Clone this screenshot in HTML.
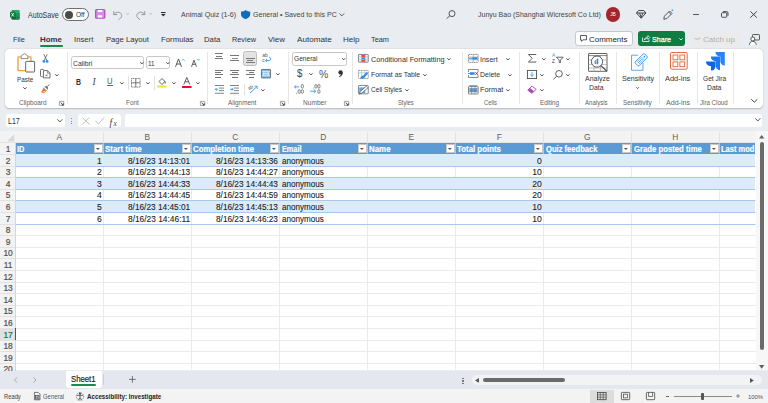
<!DOCTYPE html>
<html><head><meta charset="utf-8"><style>
html,body{margin:0;padding:0;width:768px;height:403px;overflow:hidden;background:#e9ecf0;font-family:"Liberation Sans",sans-serif;}
.t{position:absolute;white-space:nowrap;transform-origin:0 0;}
svg{overflow:visible}
</style></head><body>
<div style="position:absolute;left:0px;top:0px;width:768px;height:403px;background:#e9ecf0"></div>
<div style="position:absolute;left:5px;top:48.6px;width:758.2px;height:59.8px;background:#fff;border-radius:4.5px;box-shadow:0 0.5px 1.5px rgba(0,0,0,.22)"></div>
<div style="position:absolute;left:5.8px;top:114px;width:59px;height:13.2px;background:#fff;border-radius:2.5px"></div>
<div style="position:absolute;left:78.4px;top:114px;width:42.3px;height:13.2px;background:#fff;border-radius:2.5px"></div>
<div style="position:absolute;left:124.9px;top:114px;width:637.1px;height:13.2px;background:#fff;border-radius:2.5px"></div>
<div style="position:absolute;left:0px;top:131px;width:756px;height:239.4px;background:#fff"></div>
<div style="position:absolute;left:0px;top:131px;width:756px;height:12px;background:#f3f3f3"></div>
<div style="position:absolute;left:0px;top:131px;width:16px;height:239.4px;background:#f3f3f3"></div>
<div style="position:absolute;left:756px;top:131px;width:12px;height:239.4px;background:#f7f7f7"></div>
<div class="t" style="left:28.30px;top:10px;font-size:8.4px;line-height:10px;font-weight:400;color:#333;transform:scaleX(0.8456);">AutoSave</div>
<div class="t" style="left:181.00px;top:10px;font-size:7.6px;line-height:9px;font-weight:400;color:#444;transform:scaleX(0.9336);">Animal Quiz (1-6)</div>
<div class="t" style="left:252.80px;top:10px;font-size:7.6px;line-height:9px;font-weight:400;color:#444;transform:scaleX(0.9268);">General • Saved to this PC</div>
<div class="t" style="left:477.70px;top:10px;font-size:7.6px;line-height:9px;font-weight:400;color:#444;transform:scaleX(0.9206);">Junyu Bao (Shanghai Wicresoft Co Ltd)</div>
<div class="t" style="left:13.00px;top:35px;font-size:8.0px;line-height:9px;font-weight:400;color:#333;transform:scaleX(0.9156);">File</div>
<div class="t" style="left:40.10px;top:35px;font-size:8.0px;line-height:9px;font-weight:700;color:#333;transform:scaleX(0.9854);">Home</div>
<div class="t" style="left:73.70px;top:35px;font-size:8.0px;line-height:9px;font-weight:400;color:#333;transform:scaleX(0.9646);">Insert</div>
<div class="t" style="left:105.50px;top:35px;font-size:8.0px;line-height:9px;font-weight:400;color:#333;transform:scaleX(0.9549);">Page Layout</div>
<div class="t" style="left:160.70px;top:35px;font-size:8.0px;line-height:9px;font-weight:400;color:#333;transform:scaleX(0.9747);">Formulas</div>
<div class="t" style="left:204.20px;top:35px;font-size:8.0px;line-height:9px;font-weight:400;color:#333;transform:scaleX(0.9702);">Data</div>
<div class="t" style="left:232.40px;top:35px;font-size:8.0px;line-height:9px;font-weight:400;color:#333;transform:scaleX(0.9141);">Review</div>
<div class="t" style="left:268.00px;top:35px;font-size:8.0px;line-height:9px;font-weight:400;color:#333;transform:scaleX(0.9816);">View</div>
<div class="t" style="left:296.60px;top:35px;font-size:8.0px;line-height:9px;font-weight:400;color:#333;transform:scaleX(1.0164);">Automate</div>
<div class="t" style="left:343.00px;top:35px;font-size:8.0px;line-height:9px;font-weight:400;color:#333;">Help</div>
<div class="t" style="left:371.00px;top:35px;font-size:8.0px;line-height:9px;font-weight:400;color:#333;transform:scaleX(0.9202);">Team</div>
<div style="position:absolute;left:40.1px;top:45.4px;width:22.6px;height:1.5px;background:#1f8450;border-radius:1px"></div>
<svg style="position:absolute;left:9.6px;top:9.6px" width="9.7" height="9.4" viewBox="0 0 9.7 9.4"><rect x="1.5" y="0" width="8.1" height="9.4" rx="1.1" fill="#21a366"/><rect x="1.5" y="3.1" width="8.1" height="3.2" fill="#107c41"/><rect x="1.5" y="6.3" width="8.1" height="3.1" rx="0.6" fill="#185c37"/><rect x="5.6" y="0" width="4" height="9.4" rx="1" fill="#33c481" opacity="0.35"/><rect x="0" y="1.8" width="5.3" height="5.8" rx="0.7" fill="#107c41"/><path d="M1.5 3 L3.8 6.4 M3.8 3 L1.5 6.4" stroke="#fff" stroke-width="0.8"/></svg>
<div style="position:absolute;left:62.3px;top:8.3px;width:26.5px;height:12.5px;box-sizing:border-box;border:0.9px solid #6e6e6e;border-radius:7px;background:#fbfbfb"></div>
<div style="position:absolute;left:64.7px;top:10.5px;width:8.0px;height:8.0px;background:#4a4a4a;border-radius:50%"></div>
<div class="t" style="left:75.80px;top:10px;font-size:7.2px;line-height:9px;font-weight:400;color:#333;transform:scaleX(0.9063);">Off</div>
<svg style="position:absolute;left:95.2px;top:9.4px" width="10.4" height="9.8" viewBox="0 0 10.4 9.8"><rect x="0" y="0" width="10.4" height="9.8" rx="1.6" fill="#b74fc9"/><rect x="1.3" y="1.1" width="7.8" height="7.6" rx="0.6" fill="#d591e0"/><rect x="2.6" y="1.1" width="4.9" height="2.0" rx="0.8" fill="#fff"/><rect x="2.8" y="6.3" width="4.4" height="2.2" rx="0.8" fill="#fff"/></svg>
<svg style="position:absolute;left:112.9px;top:9.7px" width="9.6" height="9.6" viewBox="0 0 9.6 9.6"><path d="M0.8 1.2 L0.8 4.6 L4.2 4.6" fill="none" stroke="#8c8c8c" stroke-width="0.9" stroke-linejoin="round"/><path d="M0.9 4.5 C2.6 2.2 5.6 1.4 7.6 3.2 C9.6 5 9 8 5.6 9.4" fill="none" stroke="#8c8c8c" stroke-width="0.9"/></svg>
<svg style="position:absolute;left:126px;top:13.3px" width="3.2" height="1.8" viewBox="0 0 3.2 1.8"><path d="M0.3 0.3 L1.6 1.5 L2.9 0.3" fill="none" stroke="#a0a0a0" stroke-width="0.7"/></svg>
<svg style="position:absolute;left:135.8px;top:9.7px" width="9.6" height="9.6" viewBox="0 0 9.6 9.6"><path d="M8.8 1.2 L8.8 4.6 L5.4 4.6" fill="none" stroke="#8c8c8c" stroke-width="0.9" stroke-linejoin="round"/><path d="M8.7 4.5 C7 2.2 4 1.4 2 3.2 C0 5 0.6 8 4 9.4" fill="none" stroke="#8c8c8c" stroke-width="0.9"/></svg>
<svg style="position:absolute;left:148.5px;top:13.3px" width="3.2" height="1.8" viewBox="0 0 3.2 1.8"><path d="M0.3 0.3 L1.6 1.5 L2.9 0.3" fill="none" stroke="#a0a0a0" stroke-width="0.7"/></svg>
<svg style="position:absolute;left:160.9px;top:12.3px" width="4.6" height="4.4" viewBox="0 0 4.6 4.4"><rect x="0" y="0" width="4.6" height="1.1" fill="#333"/><path d="M0 1.9 L4.6 1.9 L2.3 4.4 Z" fill="#333"/></svg>
<svg style="position:absolute;left:241.1px;top:10.4px" width="9.2" height="9.2" viewBox="0 0 9.2 9.2"><path d="M4.6 0 C3.3 1.1 1.7 1.6 0 1.6 L0 4.6 C0 6.9 1.8 8.4 4.6 9.2 C7.4 8.4 9.2 6.9 9.2 4.6 L9.2 1.6 C7.5 1.6 5.9 1.1 4.6 0 Z" fill="#0f6cbd"/></svg>
<svg style="position:absolute;left:339.2px;top:12.5px" width="5.5" height="3.5" viewBox="0 0 5.5 3.5"><path d="M0.4 0.5 L2.75 2.9 L5.1 0.5" fill="none" stroke="#444" stroke-width="0.9"/></svg>
<svg style="position:absolute;left:446px;top:10px" width="10" height="9" viewBox="0 0 10 9"><circle cx="6" cy="3.6" r="3" fill="none" stroke="#444" stroke-width="0.9"/><path d="M3.9 5.7 L0.6 8.6" stroke="#444" stroke-width="0.9"/></svg>
<div style="position:absolute;left:605.8px;top:7.3px;width:14.3px;height:14.3px;background:#a4262c;border-radius:50%"></div>
<div class="t" style="left:610.20px;top:12px;font-size:4.8px;line-height:5px;font-weight:400;color:#fff;">JB</div>
<svg style="position:absolute;left:635.8px;top:9.6px" width="10.4" height="8.8" viewBox="0 0 10.4 8.8"><path d="M2.6 0.5 L7.8 0.5 L9.9 3 L5.2 8.3 L0.5 3 Z M0.5 3 L9.9 3 M3.6 3 L5.2 7.6 L6.8 3" fill="none" stroke="#333" stroke-width="0.9" stroke-linejoin="round"/></svg>
<svg style="position:absolute;left:662.8px;top:8.7px" width="11" height="10.8" viewBox="0 0 11 10.8"><path d="M0.8 10.2 L1.4 7.2 L6.6 2 L9 4.4 L3.8 9.6 Z" fill="none" stroke="#444" stroke-width="0.9" stroke-linejoin="round"/><path d="M5.6 3 L8 5.4" stroke="#444" stroke-width="0.8"/><path d="M9.4 0.4 L9.4 2.2 M8.5 1.3 L10.3 1.3" stroke="#2899f5" stroke-width="0.7"/></svg>
<div style="position:absolute;left:692.8px;top:13.6px;width:6.2px;height:0.8px;background:#555"></div>
<svg style="position:absolute;left:721px;top:11.2px" width="7.5" height="6.8" viewBox="0 0 7.5 6.8"><rect x="0.5" y="1.7" width="5.3" height="4.6" rx="1" fill="none" stroke="#333" stroke-width="0.85"/><path d="M2 0.6 L5.6 0.6 Q7 0.6 7 2 L7 4.8" fill="none" stroke="#333" stroke-width="0.85"/></svg>
<svg style="position:absolute;left:750px;top:11px" width="7.2" height="7" viewBox="0 0 7.2 7"><path d="M0.4 0.4 L6.8 6.6 M6.8 0.4 L0.4 6.6" stroke="#333" stroke-width="0.9"/></svg>
<div style="position:absolute;left:574.9px;top:31.4px;width:57.7px;height:14.9px;box-sizing:border-box;border:1px solid #c8c8c8;border-radius:3px;background:#fff"></div>
<svg style="position:absolute;left:579.5px;top:35px" width="7" height="7" viewBox="0 0 7 7"><path d="M0.5 0.5 L6.5 0.5 L6.5 4.8 L3 4.8 L1.4 6.4 L1.4 4.8 L0.5 4.8 Z" fill="none" stroke="#333" stroke-width="0.8" stroke-linejoin="round"/></svg>
<div class="t" style="left:589.00px;top:35px;font-size:7.8px;line-height:9px;font-weight:400;color:#242424;transform:scaleX(1.0209);">Comments</div>
<div style="position:absolute;left:637.5px;top:31.4px;width:47.1px;height:14.9px;background:#107c41;border-radius:3px"></div>
<svg style="position:absolute;left:641.5px;top:35px" width="8" height="7" viewBox="0 0 8 7"><path d="M0.5 2.6 L0.5 6.5 L7 6.5 L7 4.5" fill="none" stroke="#fff" stroke-width="0.8"/><path d="M2.4 5 C2.6 3 4 2 6 2 L6 0.6 L7.8 2.6 L6 4.4 L6 3.2 C4.4 3.2 3.3 3.8 2.4 5 Z" fill="none" stroke="#fff" stroke-width="0.7"/></svg>
<div class="t" style="left:651.50px;top:35px;font-size:7.9px;line-height:9px;font-weight:400;color:#fff;transform:scaleX(0.9014);-webkit-text-stroke:0.25px #fff">Share</div>
<svg style="position:absolute;left:678.6px;top:37.5px" width="4" height="2.5" viewBox="0 0 4 2.5"><path d="M0.3 0.3 L2 2 L3.7 0.3" fill="none" stroke="#fff" stroke-width="0.8"/></svg>
<div style="position:absolute;left:690.5px;top:31.4px;width:49.5px;height:14.9px;background:#ebebeb;border-radius:3px"></div>
<svg style="position:absolute;left:694px;top:36.5px" width="7" height="4" viewBox="0 0 7 4"><path d="M0.3 2.5 L1.8 1 L3.4 3 L5 0.8 L6.6 2" fill="none" stroke="#b4b4b4" stroke-width="0.8"/></svg>
<div class="t" style="left:702.50px;top:35px;font-size:7.8px;line-height:9px;font-weight:400;color:#b0b0b0;transform:scaleX(1.0251);">Catch up</div>
<svg style="position:absolute;left:748.8px;top:33.6px" width="11.2" height="11.4" viewBox="0 0 11.2 11.4"><rect x="3.5" y="0.5" width="7" height="5.5" rx="0.8" fill="none" stroke="#333" stroke-width="0.8"/><circle cx="3.8" cy="5" r="2" fill="#fff" stroke="#333" stroke-width="0.8"/><path d="M0.4 10.8 C0.6 8.3 2 7.4 3.8 7.4 C5.6 7.4 7 8.3 7.2 10.8" fill="#fff" stroke="#333" stroke-width="0.8"/></svg>
<div style="position:absolute;left:66.5px;top:52px;width:0.7px;height:52px;background:#e6e6e6"></div>
<div style="position:absolute;left:207.2px;top:52px;width:0.7px;height:52px;background:#e6e6e6"></div>
<div style="position:absolute;left:288px;top:52px;width:0.7px;height:52px;background:#e6e6e6"></div>
<div style="position:absolute;left:351.8px;top:52px;width:0.7px;height:52px;background:#e6e6e6"></div>
<div style="position:absolute;left:461.8px;top:52px;width:0.7px;height:52px;background:#e6e6e6"></div>
<div style="position:absolute;left:519.4px;top:52px;width:0.7px;height:52px;background:#e6e6e6"></div>
<div style="position:absolute;left:578.5px;top:52px;width:0.7px;height:52px;background:#e6e6e6"></div>
<div style="position:absolute;left:615.7px;top:52px;width:0.7px;height:52px;background:#e6e6e6"></div>
<div style="position:absolute;left:659.4px;top:52px;width:0.7px;height:52px;background:#e6e6e6"></div>
<div style="position:absolute;left:697.3px;top:52px;width:0.7px;height:52px;background:#e6e6e6"></div>
<div style="position:absolute;left:732.6px;top:52px;width:0.7px;height:52px;background:#e6e6e6"></div>
<div class="t" style="left:18.50px;top:99px;font-size:7.0px;line-height:7px;font-weight:400;color:#5f5f5f;transform:scaleX(0.9179);">Clipboard</div>
<div class="t" style="left:125.50px;top:99px;font-size:7.0px;line-height:7px;font-weight:400;color:#5f5f5f;transform:scaleX(0.9067);">Font</div>
<div class="t" style="left:228.40px;top:99px;font-size:7.0px;line-height:7px;font-weight:400;color:#5f5f5f;transform:scaleX(0.9091);">Alignment</div>
<div class="t" style="left:302.60px;top:99px;font-size:7.0px;line-height:7px;font-weight:400;color:#5f5f5f;transform:scaleX(0.9398);">Number</div>
<div class="t" style="left:398.30px;top:99px;font-size:7.0px;line-height:7px;font-weight:400;color:#5f5f5f;transform:scaleX(0.8237);">Styles</div>
<div class="t" style="left:483.70px;top:99px;font-size:7.0px;line-height:7px;font-weight:400;color:#5f5f5f;transform:scaleX(0.8290);">Cells</div>
<div class="t" style="left:540.00px;top:99px;font-size:7.0px;line-height:7px;font-weight:400;color:#5f5f5f;transform:scaleX(0.8876);">Editing</div>
<div class="t" style="left:585.40px;top:99px;font-size:7.0px;line-height:7px;font-weight:400;color:#5f5f5f;transform:scaleX(0.8670);">Analysis</div>
<div class="t" style="left:623.00px;top:99px;font-size:7.0px;line-height:7px;font-weight:400;color:#5f5f5f;transform:scaleX(0.9141);">Sensitivity</div>
<div class="t" style="left:666.00px;top:99px;font-size:7.0px;line-height:7px;font-weight:400;color:#5f5f5f;transform:scaleX(1.0111);">Add-ins</div>
<div class="t" style="left:700.30px;top:99px;font-size:7.0px;line-height:7px;font-weight:400;color:#5f5f5f;transform:scaleX(0.8790);">Jira Cloud</div>
<svg style="position:absolute;left:59.4px;top:100.5px" width="5.2" height="4.8" viewBox="0 0 5.2 4.8"><path d="M0.4 0.4 L4.8 0.4 L4.8 4.4 L0.4 4.4 Z" fill="none" stroke="#666" stroke-width="0.6"/><path d="M1.6 1.6 L4.2 4.0 M4.2 2.4 L4.2 4.0 L2.6 4.0" fill="none" stroke="#333" stroke-width="0.8"/></svg>
<svg style="position:absolute;left:199.7px;top:100.5px" width="5.2" height="4.8" viewBox="0 0 5.2 4.8"><path d="M0.4 0.4 L4.8 0.4 L4.8 4.4 L0.4 4.4 Z" fill="none" stroke="#666" stroke-width="0.6"/><path d="M1.6 1.6 L4.2 4.0 M4.2 2.4 L4.2 4.0 L2.6 4.0" fill="none" stroke="#333" stroke-width="0.8"/></svg>
<svg style="position:absolute;left:280.2px;top:100.5px" width="5.2" height="4.8" viewBox="0 0 5.2 4.8"><path d="M0.4 0.4 L4.8 0.4 L4.8 4.4 L0.4 4.4 Z" fill="none" stroke="#666" stroke-width="0.6"/><path d="M1.6 1.6 L4.2 4.0 M4.2 2.4 L4.2 4.0 L2.6 4.0" fill="none" stroke="#333" stroke-width="0.8"/></svg>
<svg style="position:absolute;left:343.8px;top:100.5px" width="5.2" height="4.8" viewBox="0 0 5.2 4.8"><path d="M0.4 0.4 L4.8 0.4 L4.8 4.4 L0.4 4.4 Z" fill="none" stroke="#666" stroke-width="0.6"/><path d="M1.6 1.6 L4.2 4.0 M4.2 2.4 L4.2 4.0 L2.6 4.0" fill="none" stroke="#333" stroke-width="0.8"/></svg>
<svg style="position:absolute;left:16.8px;top:52.8px" width="18.5" height="19.5" viewBox="0 0 18.5 19.5"><path d="M3.6 3.9 L1.6 3.9 Q1 3.9 1 4.5 L1 17 Q1 17.6 1.6 17.6 L8.6 17.6" fill="none" stroke="#f0a030" stroke-width="1.3"/><path d="M11.4 3.9 L13.4 3.9 Q14 3.9 14 4.5 L14 8" fill="none" stroke="#f0a030" stroke-width="1.3"/><path d="M3.9 5.6 L4.4 2.6 L7.5 0.7 L10.6 2.6 L11.1 5.6 Z" fill="#fff" stroke="#707070" stroke-width="0.8" stroke-linejoin="round"/><rect x="8.7" y="8.4" width="8.9" height="10.6" rx="0.6" fill="#fff" stroke="#555" stroke-width="0.9"/></svg>
<div class="t" style="left:16.50px;top:75px;font-size:7.4px;line-height:9px;font-weight:400;color:#333;transform:scaleX(0.8562);">Paste</div>
<svg style="position:absolute;left:22.6px;top:87.3px" width="3.8" height="2.2" viewBox="0 0 3.8 2.2"><path d="M0.3 0.3 L1.9 2.0 L3.5 0.3" fill="none" stroke="#444" stroke-width="0.95"/></svg>
<svg style="position:absolute;left:41.7px;top:54px" width="7" height="9.2" viewBox="0 0 7 9.2"><path d="M1.8 0.2 L4.6 6 M5.2 0.2 L2.4 6" stroke="#555" stroke-width="0.8"/><circle cx="1.9" cy="7.4" r="1.4" fill="#2f8fe0"/><circle cx="5.1" cy="7.4" r="1.4" fill="#2f8fe0"/></svg>
<svg style="position:absolute;left:40px;top:69.4px" width="10.6" height="9.4" viewBox="0 0 10.6 9.4"><path d="M2.6 7.6 L1.4 7.6 Q0.5 7.6 0.5 6.7 L0.5 1.2 Q0.5 0.4 1.4 0.4 L3.6 0.4" fill="none" stroke="#555" stroke-width="0.85"/><path d="M3.4 1.6 L7.4 1.6 L10 4.2 L10 8.9 L3.4 8.9 Z" fill="#fff" stroke="#555" stroke-width="0.85" stroke-linejoin="round"/><path d="M7.4 1.6 L7.4 4.2 L10 4.2" fill="none" stroke="#555" stroke-width="0.6"/><rect x="5.6" y="5.6" width="1.8" height="1.6" fill="#888"/></svg>
<svg style="position:absolute;left:55px;top:73.5px" width="3.8" height="2.2" viewBox="0 0 3.8 2.2"><path d="M0.3 0.3 L1.9 2.0 L3.5 0.3" fill="none" stroke="#444" stroke-width="0.95"/></svg>
<svg style="position:absolute;left:40.6px;top:84.3px" width="8.6" height="9.2" viewBox="0 0 8.6 9.2"><path d="M0.3 8.2 L2.6 3.8 L5.4 6.6 Z" fill="#e8731c"/><path d="M2.6 3.8 L3.8 2.6 L6.6 5.4 L5.4 6.6 Z" fill="#fff" stroke="#888" stroke-width="0.5"/><path d="M3.8 2.6 L5.6 2 L7 3.4 L6.6 5.4 Z" fill="#666"/><path d="M6.2 2.6 L8.3 0.4" stroke="#666" stroke-width="1"/><path d="M0.3 8.2 L3.2 8.6 L5.4 6.6" fill="none" stroke="#e8731c" stroke-width="0.8"/></svg>
<div style="position:absolute;left:71.4px;top:56.2px;width:72.6px;height:13.3px;box-sizing:border-box;border:0.8px solid #c7c7c7;border-radius:2.5px;background:#fff"></div>
<div class="t" style="left:73.00px;top:59px;font-size:7.9px;line-height:9px;font-weight:400;color:#333;transform:scaleX(0.8620);">Calibri</div>
<svg style="position:absolute;left:139.5px;top:62.4px" width="3.6" height="2.2" viewBox="0 0 3.6 2.2"><path d="M0.3 0.3 L1.8 2.0 L3.3000000000000003 0.3" fill="none" stroke="#444" stroke-width="0.95"/></svg>
<div style="position:absolute;left:146px;top:56.2px;width:24.4px;height:13.3px;box-sizing:border-box;border:0.8px solid #c7c7c7;border-radius:2.5px;background:#fff"></div>
<div class="t" style="left:147.60px;top:59px;font-size:7.9px;line-height:9px;font-weight:400;color:#333;transform:scaleX(0.8049);">11</div>
<svg style="position:absolute;left:165.6px;top:62.4px" width="3.6" height="2.2" viewBox="0 0 3.6 2.2"><path d="M0.3 0.3 L1.8 2.0 L3.3000000000000003 0.3" fill="none" stroke="#444" stroke-width="0.95"/></svg>
<svg style="position:absolute;left:175px;top:57.5px" width="10" height="9" viewBox="0 0 10 9"><path d="M0.5 8.8 L3.5 1 L6.5 8.8 M1.6 6 L5.4 6" fill="none" stroke="#444" stroke-width="0.9"/><path d="M7 2.6 L8.3 1.2 L9.6 2.6" fill="none" stroke="#2899f5" stroke-width="0.8"/></svg>
<svg style="position:absolute;left:191.3px;top:57.5px" width="9" height="9" viewBox="0 0 9 9"><path d="M0.5 8.8 L3 2.2 L5.5 8.8 M1.4 6.3 L4.6 6.3" fill="none" stroke="#444" stroke-width="0.85"/><path d="M6 1 L7.3 2.4 L8.6 1" fill="none" stroke="#2899f5" stroke-width="0.8"/></svg>
<div class="t" style="left:76.30px;top:77px;font-size:9.0px;line-height:10px;font-weight:700;color:#333;transform:scaleX(0.7695);">B</div>
<div class="t" style="left:92.40px;top:77px;font-size:9.4px;line-height:11px;font-weight:400;color:#444;font-style:italic;font-family:Liberation Serif">I</div>
<div class="t" style="left:106.90px;top:76px;font-size:8.6px;line-height:10px;font-weight:400;color:#555;transform:scaleX(0.8858);">U</div>
<div style="position:absolute;left:106.7px;top:85.3px;width:5.9px;height:0.7px;background:#666"></div>
<svg style="position:absolute;left:119.7px;top:81.8px" width="3.8" height="2.2" viewBox="0 0 3.8 2.2"><path d="M0.3 0.3 L1.9 2.0 L3.5 0.3" fill="none" stroke="#444" stroke-width="0.95"/></svg>
<div style="position:absolute;left:127.5px;top:75.5px;width:0.6px;height:14px;background:#e0e0e0"></div>
<svg style="position:absolute;left:131px;top:77.5px" width="9.6" height="9.6" viewBox="0 0 9.6 9.6"><rect x="0.5" y="0.5" width="8.6" height="8.6" fill="none" stroke="#555" stroke-width="0.8" stroke-dasharray="1 0.6"/><path d="M4.8 0.5 L4.8 9.1 M0.5 4.8 L9.1 4.8" stroke="#555" stroke-width="0.8"/></svg>
<svg style="position:absolute;left:146px;top:81.8px" width="3.8" height="2.2" viewBox="0 0 3.8 2.2"><path d="M0.3 0.3 L1.9 2.0 L3.5 0.3" fill="none" stroke="#444" stroke-width="0.95"/></svg>
<div style="position:absolute;left:153.5px;top:75.5px;width:0.6px;height:14px;background:#e0e0e0"></div>
<svg style="position:absolute;left:157.4px;top:77px" width="9.6" height="11" viewBox="0 0 9.6 11"><path d="M2 4.5 L5 1.5 L8 4.5 L5 7.5 Z" fill="none" stroke="#444" stroke-width="0.8"/><path d="M7.4 4 C8.5 5 8.8 6 8.2 6.6" fill="#2f6ea8" stroke="#2f6ea8" stroke-width="0.8"/><rect x="0" y="8.5" width="9.6" height="2" fill="#ffe11a"/></svg>
<svg style="position:absolute;left:171.8px;top:81.8px" width="3.8" height="2.2" viewBox="0 0 3.8 2.2"><path d="M0.3 0.3 L1.9 2.0 L3.5 0.3" fill="none" stroke="#444" stroke-width="0.95"/></svg>
<svg style="position:absolute;left:181.6px;top:76.5px" width="9.6" height="11.5" viewBox="0 0 9.6 11.5"><path d="M1.8 7.5 L4.8 0.5 L7.8 7.5 M3 4.8 L6.6 4.8" fill="none" stroke="#444" stroke-width="0.85"/><rect x="0" y="9" width="9.6" height="2" fill="#e81123"/></svg>
<svg style="position:absolute;left:196px;top:81.8px" width="3.8" height="2.2" viewBox="0 0 3.8 2.2"><path d="M0.3 0.3 L1.9 2.0 L3.5 0.3" fill="none" stroke="#444" stroke-width="0.95"/></svg>
<div style="position:absolute;left:243.3px;top:51.3px;width:13.9px;height:14.4px;background:#e3e3e3;border:0.8px solid #bdbdbd;border-radius:2.5px;box-sizing:border-box"></div>
<div style="position:absolute;left:214.9px;top:53.4px;width:8.5px;height:1.0px;background:#777"></div>
<div style="position:absolute;left:216.1px;top:56.0px;width:5.8px;height:1.0px;background:#777"></div>
<div style="position:absolute;left:214.9px;top:58.2px;width:8.5px;height:1.0px;background:#777"></div>
<div style="position:absolute;left:230.4px;top:55.1px;width:8.5px;height:1.0px;background:#777"></div>
<div style="position:absolute;left:231.6px;top:57.6px;width:6.0px;height:1.0px;background:#8a8a8a"></div>
<div style="position:absolute;left:230.4px;top:60.2px;width:8.5px;height:1.0px;background:#777"></div>
<div style="position:absolute;left:246.0px;top:57.6px;width:8.5px;height:1.0px;background:#777"></div>
<div style="position:absolute;left:247.2px;top:60.0px;width:6.0px;height:1.0px;background:#777"></div>
<div style="position:absolute;left:246.0px;top:62.4px;width:8.5px;height:1.0px;background:#777"></div>
<svg style="position:absolute;left:262.4px;top:53.4px" width="9.4" height="10" viewBox="0 0 9.4 10"><text x="0.3" y="4.4" font-size="5" font-family="Liberation Sans" fill="#555">ab</text><text x="0.3" y="9.2" font-size="5" font-family="Liberation Sans" fill="#555">c</text><path d="M3.6 7.6 L7.2 7.6 C9 7.6 9 4.2 7.2 4.2" fill="none" stroke="#2899f5" stroke-width="0.9"/><path d="M4.9 6.2 L3.5 7.6 L4.9 9" fill="none" stroke="#2899f5" stroke-width="0.9"/></svg>
<div style="position:absolute;left:214.9px;top:69.5px;width:8.5px;height:1.0px;background:#777"></div>
<div style="position:absolute;left:230.4px;top:69.5px;width:8.5px;height:1.0px;background:#777"></div>
<div style="position:absolute;left:246.0px;top:69.5px;width:8.5px;height:1.0px;background:#777"></div>
<div style="position:absolute;left:214.9px;top:72.1px;width:5.9px;height:1.0px;background:#777"></div>
<div style="position:absolute;left:231.7px;top:72.1px;width:5.9px;height:1.0px;background:#777"></div>
<div style="position:absolute;left:248.6px;top:72.1px;width:5.9px;height:1.0px;background:#777"></div>
<div style="position:absolute;left:214.9px;top:74.4px;width:8.5px;height:1.0px;background:#777"></div>
<div style="position:absolute;left:230.4px;top:74.4px;width:8.5px;height:1.0px;background:#777"></div>
<div style="position:absolute;left:246.0px;top:74.4px;width:8.5px;height:1.0px;background:#777"></div>
<div style="position:absolute;left:214.9px;top:77.0px;width:5.9px;height:1.0px;background:#777"></div>
<div style="position:absolute;left:231.7px;top:77.0px;width:5.9px;height:1.0px;background:#777"></div>
<div style="position:absolute;left:248.6px;top:77.0px;width:5.9px;height:1.0px;background:#777"></div>
<svg style="position:absolute;left:260.8px;top:68.6px" width="10" height="9.4" viewBox="0 0 10 9.4"><rect x="0.45" y="0.45" width="9.1" height="8.5" rx="0.5" fill="#7dbdf0" stroke="#666" stroke-width="0.9"/><path d="M0.9 2.7 L9.1 2.7 M0.9 6.7 L9.1 6.7" stroke="#fff" stroke-width="0.7"/><path d="M2 4.7 L8 4.7" stroke="#fff" stroke-width="0.8"/><path d="M3.2 3.6 L2 4.7 L3.2 5.8 M6.8 3.6 L8 4.7 L6.8 5.8" fill="none" stroke="#fff" stroke-width="0.8"/></svg>
<svg style="position:absolute;left:275.9px;top:73px" width="3.8" height="2.2" viewBox="0 0 3.8 2.2"><path d="M0.3 0.3 L1.9 2.0 L3.5 0.3" fill="none" stroke="#444" stroke-width="0.95"/></svg>
<svg style="position:absolute;left:214.7px;top:84.6px" width="9" height="8.8" viewBox="0 0 9 8.8"><rect x="0" y="0" width="9" height="0.9" fill="#777"/><rect x="4" y="2.6" width="5" height="0.9" fill="#777"/><rect x="4" y="5.2" width="5" height="0.9" fill="#777"/><rect x="0" y="7.8" width="9" height="0.9" fill="#777"/><path d="M0.3 4.35 L3.2 4.35" stroke="#2899f5" stroke-width="0.9"/><path d="M1.6 3 L0.3 4.35 L1.6 5.7" fill="none" stroke="#2899f5" stroke-width="0.9"/></svg>
<svg style="position:absolute;left:230.4px;top:84.6px" width="9" height="8.8" viewBox="0 0 9 8.8"><rect x="0" y="0" width="9" height="0.9" fill="#777"/><rect x="4" y="2.6" width="5" height="0.9" fill="#777"/><rect x="4" y="5.2" width="5" height="0.9" fill="#777"/><rect x="0" y="7.8" width="9" height="0.9" fill="#777"/><path d="M0.2 4.35 L3.1 4.35" stroke="#2899f5" stroke-width="0.9"/><path d="M1.8 3 L3.1 4.35 L1.8 5.7" fill="none" stroke="#2899f5" stroke-width="0.9"/></svg>
<div style="position:absolute;left:243.6px;top:84px;width:0.6px;height:11px;background:#e0e0e0"></div>
<svg style="position:absolute;left:248px;top:84px" width="10" height="9.5" viewBox="0 0 10 9.5"><text x="0" y="5" font-size="5" font-family="Liberation Sans" fill="#555" transform="rotate(-30 3 4)">ab</text><path d="M2 9 L9 2.5" stroke="#2899f5" stroke-width="0.9"/><path d="M6.5 2.2 L9.2 2.2 L9.2 5" fill="none" stroke="#2899f5" stroke-width="0.8"/></svg>
<svg style="position:absolute;left:260.6px;top:88.5px" width="3.8" height="2.2" viewBox="0 0 3.8 2.2"><path d="M0.3 0.3 L1.9 2.0 L3.5 0.3" fill="none" stroke="#444" stroke-width="0.95"/></svg>
<div style="position:absolute;left:292.3px;top:51.5px;width:54.3px;height:14.1px;box-sizing:border-box;border:0.8px solid #c7c7c7;border-radius:2.5px;background:#fff"></div>
<div class="t" style="left:293.80px;top:54px;font-size:7.9px;line-height:9px;font-weight:400;color:#333;transform:scaleX(0.8361);">General</div>
<svg style="position:absolute;left:342px;top:57.9px" width="3.4" height="2.1" viewBox="0 0 3.4 2.1"><path d="M0.3 0.3 L1.7 1.9000000000000001 L3.1 0.3" fill="none" stroke="#444" stroke-width="0.95"/></svg>
<div class="t" style="left:296.60px;top:68px;font-size:10.4px;line-height:11px;font-weight:400;color:#444;transform:scaleX(0.9339);">$</div>
<svg style="position:absolute;left:309px;top:72.6px" width="3.8" height="2.2" viewBox="0 0 3.8 2.2"><path d="M0.3 0.3 L1.9 2.0 L3.5 0.3" fill="none" stroke="#444" stroke-width="0.95"/></svg>
<div class="t" style="left:319.30px;top:68px;font-size:11.2px;line-height:12px;font-weight:400;color:#555;transform:scaleX(0.9340);">%</div>
<svg style="position:absolute;left:337.6px;top:70.4px" width="5" height="7.4" viewBox="0 0 5 7.4"><circle cx="2.6" cy="2.4" r="2.2" fill="#333"/><path d="M4.6 2.6 C4.8 5 3.4 6.6 1.2 7.2 L1 6.4 C2.4 5.8 3.2 4.8 3 3.8 Z" fill="#333"/></svg>
<svg style="position:absolute;left:294.4px;top:84.2px" width="10" height="9.8" viewBox="0 0 10 9.8"><path d="M0.6 2.9 L5.2 2.9" stroke="#2899f5" stroke-width="0.9"/><path d="M2.2 1.3 L0.5 2.9 L2.2 4.5" fill="none" stroke="#2899f5" stroke-width="0.9"/><ellipse cx="8.3" cy="2.3" rx="1.15" ry="1.9" fill="none" stroke="#555" stroke-width="0.7"/><circle cx="2.6" cy="9.2" r="0.45" fill="#555"/><ellipse cx="5.2" cy="7.5" rx="1.15" ry="1.9" fill="none" stroke="#555" stroke-width="0.7"/><ellipse cx="8.3" cy="7.5" rx="1.15" ry="1.9" fill="none" stroke="#555" stroke-width="0.7"/></svg>
<svg style="position:absolute;left:310.2px;top:84.2px" width="10.2" height="9.8" viewBox="0 0 10.2 9.8"><circle cx="3.4" cy="4" r="0.45" fill="#555"/><ellipse cx="5.9" cy="2.3" rx="1.15" ry="1.9" fill="none" stroke="#555" stroke-width="0.7"/><ellipse cx="8.9" cy="2.3" rx="1.15" ry="1.9" fill="none" stroke="#555" stroke-width="0.7"/><ellipse cx="8.9" cy="7.5" rx="1.15" ry="1.9" fill="none" stroke="#555" stroke-width="0.7"/><path d="M0.2 7.2 L5.6 7.2" stroke="#2899f5" stroke-width="0.9"/><path d="M4 5.6 L5.7 7.2 L4 8.8" fill="none" stroke="#2899f5" stroke-width="0.9"/></svg>
<svg style="position:absolute;left:358.2px;top:54.2px" width="10.7" height="8.6" viewBox="0 0 10.7 8.6"><rect x="0.45" y="0.45" width="9.8" height="7.7" rx="0.5" fill="#f4f4f4" stroke="#7a7a7a" stroke-width="0.9"/><path d="M0.5 3 L10.2 3 M0.5 5.6 L10.2 5.6" stroke="#a0a0a0" stroke-width="0.5"/><rect x="3.4" y="0.9" width="3.9" height="2.0" fill="#e8434a"/><rect x="3.4" y="3.3" width="3.9" height="2.0" fill="#2f8fe0"/><rect x="3.4" y="5.8" width="3.9" height="2.0" fill="#e8434a"/></svg>
<div class="t" style="left:370.90px;top:55px;font-size:7.9px;line-height:9px;font-weight:400;color:#333;transform:scaleX(0.9273);">Conditional Formatting</div>
<svg style="position:absolute;left:447.2px;top:58.3px" width="3.8" height="2.2" viewBox="0 0 3.8 2.2"><path d="M0.3 0.3 L1.9 2.0 L3.5 0.3" fill="none" stroke="#444" stroke-width="0.95"/></svg>
<svg style="position:absolute;left:358.2px;top:69.6px" width="10.7" height="9" viewBox="0 0 10.7 9"><rect x="0.45" y="0.45" width="9.8" height="8.1" rx="0.5" fill="#fff" stroke="#7a7a7a" stroke-width="0.8" stroke-dasharray="1.2 0.5"/><path d="M0.5 2.8 L10.2 2.8 M3.6 0.5 L3.6 8.5 M7 0.5 L7 8.5" stroke="#a0a0a0" stroke-width="0.5"/><path d="M2.2 8.6 C2.4 6.6 3.6 5.6 5.2 5.4 L8.8 2 L10.2 3.4 L6.8 7 C6.6 8.4 5 9 2.2 8.6 Z" fill="#2f8fe0"/></svg>
<div class="t" style="left:370.90px;top:70px;font-size:7.9px;line-height:9px;font-weight:400;color:#333;transform:scaleX(0.8709);">Format as Table</div>
<svg style="position:absolute;left:423.3px;top:73.6px" width="3.8" height="2.2" viewBox="0 0 3.8 2.2"><path d="M0.3 0.3 L1.9 2.0 L3.5 0.3" fill="none" stroke="#444" stroke-width="0.95"/></svg>
<svg style="position:absolute;left:358.2px;top:84.6px" width="10.7" height="9.4" viewBox="0 0 10.7 9.4"><rect x="0.45" y="0.45" width="9.8" height="8.4" rx="0.5" fill="#fff" stroke="#7a7a7a" stroke-width="0.9"/><rect x="1.2" y="2.4" width="6" height="5.6" fill="#5aa9ee"/><path d="M1.2 8.8 L2.2 6.4 L8.4 1.2 L10 2.8 L3.6 8.2 Z" fill="#fff" stroke="#505050" stroke-width="0.7"/><path d="M1 9.2 C2 8.4 2.6 8 3.6 8.2" stroke="#2f8fe0" stroke-width="1"/></svg>
<div class="t" style="left:370.90px;top:85px;font-size:7.9px;line-height:9px;font-weight:400;color:#333;transform:scaleX(0.8307);">Cell Styles</div>
<svg style="position:absolute;left:404.5px;top:89.2px" width="3.8" height="2.2" viewBox="0 0 3.8 2.2"><path d="M0.3 0.3 L1.9 2.0 L3.5 0.3" fill="none" stroke="#444" stroke-width="0.95"/></svg>
<svg style="position:absolute;left:468px;top:54px" width="10.6" height="8.8" viewBox="0 0 10.6 8.8"><rect x="0.45" y="0.45" width="9.7" height="7.9" rx="0.4" fill="#fff" stroke="#6a6a6a" stroke-width="0.8" stroke-dasharray="1.3 0.5"/><path d="M0.5 3 L10.1 3 M0.5 5.8 L10.1 5.8 M5.3 0.5 L5.3 8.3" stroke="#8a8a8a" stroke-width="0.5"/><rect x="4.2" y="3.2" width="5.4" height="2.4" fill="#2f8fe0"/><path d="M1 4.4 L3.6 4.4 M2.6 3.3 L3.7 4.4 L2.6 5.5" fill="none" stroke="#2f8fe0" stroke-width="0.8"/></svg>
<div class="t" style="left:480.40px;top:55px;font-size:7.9px;line-height:9px;font-weight:400;color:#333;transform:scaleX(0.8908);">Insert</div>
<svg style="position:absolute;left:505.6px;top:58.3px" width="3.8" height="2.2" viewBox="0 0 3.8 2.2"><path d="M0.3 0.3 L1.9 2.0 L3.5 0.3" fill="none" stroke="#444" stroke-width="0.95"/></svg>
<svg style="position:absolute;left:468px;top:69.4px" width="10.6" height="9" viewBox="0 0 10.6 9"><path d="M0.45 3 L0.45 0.45 L10.1 0.45 L10.1 3 M0.45 6 L0.45 8.5 L10.1 8.5 L10.1 6" fill="none" stroke="#6a6a6a" stroke-width="0.8"/><rect x="2" y="3.2" width="4.6" height="2.6" fill="#2f8fe0"/><path d="M0 4.5 L2 4.5" stroke="#2f8fe0" stroke-width="0.9"/><path d="M7.4 3.1 L9.9 5.9 M9.9 3.1 L7.4 5.9" stroke="#e81123" stroke-width="0.85"/></svg>
<div class="t" style="left:480.40px;top:70px;font-size:7.9px;line-height:9px;font-weight:400;color:#333;transform:scaleX(0.8801);">Delete</div>
<svg style="position:absolute;left:508px;top:73.6px" width="3.8" height="2.2" viewBox="0 0 3.8 2.2"><path d="M0.3 0.3 L1.9 2.0 L3.5 0.3" fill="none" stroke="#444" stroke-width="0.95"/></svg>
<svg style="position:absolute;left:468px;top:84.8px" width="10.6" height="9.4" viewBox="0 0 10.6 9.4"><rect x="0.45" y="1.6" width="9.7" height="7.4" rx="0.4" fill="#fff" stroke="#6a6a6a" stroke-width="0.8"/><rect x="1.4" y="3.4" width="7.8" height="3.6" fill="#5aa9ee"/><path d="M0.5 3.4 L10.1 3.4 M0.5 5.2 L10.1 5.2 M0.5 7 L10.1 7 M3.6 1.6 L3.6 9 M7 1.6 L7 9" stroke="#6a6a6a" stroke-width="0.45"/><path d="M1.4 0.6 L9.2 0.6" stroke="#2f8fe0" stroke-width="0.8"/></svg>
<div class="t" style="left:480.40px;top:85px;font-size:7.9px;line-height:9px;font-weight:400;color:#333;transform:scaleX(0.9353);">Format</div>
<svg style="position:absolute;left:505.6px;top:89.2px" width="3.8" height="2.2" viewBox="0 0 3.8 2.2"><path d="M0.3 0.3 L1.9 2.0 L3.5 0.3" fill="none" stroke="#444" stroke-width="0.95"/></svg>
<svg style="position:absolute;left:527.8px;top:54.3px" width="8.4" height="8.6" viewBox="0 0 8.4 8.6"><path d="M8 1 L8 0.5 L0.5 0.5 L4.2 4.3 L0.5 8.1 L8 8.1 L8 7.6" fill="none" stroke="#444" stroke-width="0.85"/></svg>
<svg style="position:absolute;left:541.5px;top:58.3px" width="3.8" height="2.2" viewBox="0 0 3.8 2.2"><path d="M0.3 0.3 L1.9 2.0 L3.5 0.3" fill="none" stroke="#444" stroke-width="0.95"/></svg>
<svg style="position:absolute;left:551.7px;top:53.2px" width="11.8" height="10.2" viewBox="0 0 11.8 10.2"><text x="0" y="4.3" font-size="4.6" font-family="Liberation Sans" fill="#2899f5">A</text><text x="0" y="9.8" font-size="4.6" font-family="Liberation Sans" fill="#444">Z</text><path d="M4.4 4.2 L11.2 4.2 L8.6 7 L8.6 9.6 L7.2 9.6 L7.2 7 Z" fill="none" stroke="#444" stroke-width="0.8"/></svg>
<svg style="position:absolute;left:565.8px;top:58.3px" width="3.8" height="2.2" viewBox="0 0 3.8 2.2"><path d="M0.3 0.3 L1.9 2.0 L3.5 0.3" fill="none" stroke="#444" stroke-width="0.95"/></svg>
<svg style="position:absolute;left:527px;top:69.5px" width="10" height="9" viewBox="0 0 10 9"><rect x="0.4" y="0.4" width="9.2" height="8.2" fill="#fff" stroke="#444" stroke-width="0.85"/><path d="M5 1.8 L5 6.3 M3.2 4.6 L5 6.3 L6.8 4.6" fill="none" stroke="#2899f5" stroke-width="0.8"/></svg>
<svg style="position:absolute;left:540.3px;top:73.6px" width="3.8" height="2.2" viewBox="0 0 3.8 2.2"><path d="M0.3 0.3 L1.9 2.0 L3.5 0.3" fill="none" stroke="#444" stroke-width="0.95"/></svg>
<svg style="position:absolute;left:552.6px;top:69.5px" width="9.8" height="9.5" viewBox="0 0 9.8 9.5"><circle cx="6" cy="3.8" r="3.3" fill="none" stroke="#444" stroke-width="0.85"/><path d="M3.6 6.2 L0.5 9.2" stroke="#444" stroke-width="0.9"/></svg>
<svg style="position:absolute;left:565.8px;top:73.6px" width="3.8" height="2.2" viewBox="0 0 3.8 2.2"><path d="M0.3 0.3 L1.9 2.0 L3.5 0.3" fill="none" stroke="#444" stroke-width="0.95"/></svg>
<svg style="position:absolute;left:527px;top:85px" width="10" height="8.6" viewBox="0 0 10 8.6"><path d="M0.8 5.3 L5 1 L9.2 4.3 L5 8.3 Z" fill="#fff" stroke="#b146c2" stroke-width="0.9"/><path d="M0.8 5.3 L3 3 L7 6.3 L5 8.3 Z" fill="#b146c2"/></svg>
<svg style="position:absolute;left:540.3px;top:89.2px" width="3.8" height="2.2" viewBox="0 0 3.8 2.2"><path d="M0.3 0.3 L1.9 2.0 L3.5 0.3" fill="none" stroke="#444" stroke-width="0.95"/></svg>
<svg style="position:absolute;left:587.5px;top:53px" width="20" height="19" viewBox="0 0 20 19"><rect x="0.5" y="0.5" width="18.5" height="17.8" rx="0.4" fill="#fff" stroke="#505050" stroke-width="0.9"/><path d="M0.5 2.6 L19 2.6" stroke="#505050" stroke-width="0.7"/><path d="M0.5 7 L19 7 M0.5 11.5 L19 11.5 M0.5 15 L19 15 M6 2.6 L6 18.3 M12.5 2.6 L12.5 18.3" stroke="#9a9a9a" stroke-width="0.6"/><circle cx="9" cy="8.6" r="5.6" fill="#fff" stroke="#454545" stroke-width="0.9"/><rect x="6.6" y="7.4" width="1.5" height="3.8" fill="#8a8a8a"/><rect x="8.6" y="5.6" width="1.7" height="5.6" fill="#2f8fe0"/><path d="M13 12.6 L19 18.4" stroke="#454545" stroke-width="1.2"/></svg>
<div class="t" style="left:584.60px;top:74px;font-size:7.7px;line-height:9px;font-weight:400;color:#333;transform:scaleX(0.9052);">Analyze</div>
<div class="t" style="left:589.30px;top:83px;font-size:7.7px;line-height:9px;font-weight:400;color:#333;transform:scaleX(0.8912);">Data</div>
<svg style="position:absolute;left:630.9px;top:52.4px" width="16.8" height="18.8" viewBox="0 0 16.8 18.8"><path d="M0.5 3.2 L7 3.2 M0.5 3.2 L0.5 18.3 L12 18.3 L12 11" fill="none" stroke="#4aa3e8" stroke-width="0.9"/><g transform="rotate(45 10 8)"><rect x="7.3" y="1.2" width="5.4" height="13" rx="0.8" fill="#fff" stroke="#2f8fe0" stroke-width="0.9"/><path d="M8.3 5.6 L11.7 5.6 M8.3 7.1 L11.7 7.1 M8.3 8.6 L11.7 8.6 M8.3 10.1 L11.7 10.1 M8.3 11.6 L11.7 11.6" stroke="#2f8fe0" stroke-width="0.75"/><circle cx="10" cy="3.2" r="0.8" fill="#2f8fe0"/></g></svg>
<div class="t" style="left:621.50px;top:74px;font-size:7.7px;line-height:9px;font-weight:400;color:#333;transform:scaleX(0.9262);">Sensitivity</div>
<svg style="position:absolute;left:636px;top:87px" width="3" height="1.8" viewBox="0 0 3 1.8"><path d="M0.3 0.3 L1.5 1.6 L2.7 0.3" fill="none" stroke="#444" stroke-width="0.95"/></svg>
<svg style="position:absolute;left:669.5px;top:52.3px" width="17.7" height="17.7" viewBox="0 0 17.7 17.7"><rect x="0.5" y="0.5" width="16.7" height="16.7" rx="1.2" fill="#fff" stroke="#e0623f" stroke-width="0.95"/><rect x="3" y="3" width="4.8" height="4.8" fill="none" stroke="#e0623f" stroke-width="0.9"/><rect x="9.9" y="3" width="4.8" height="4.8" fill="none" stroke="#e0623f" stroke-width="0.9"/><rect x="3" y="9.9" width="4.8" height="4.8" fill="none" stroke="#e0623f" stroke-width="0.9"/><rect x="9.9" y="9.9" width="4.8" height="4.8" fill="none" stroke="#e0623f" stroke-width="0.9"/></svg>
<div class="t" style="left:665.40px;top:74px;font-size:7.7px;line-height:9px;font-weight:400;color:#333;transform:scaleX(0.9690);">Add-ins</div>
<svg style="position:absolute;left:704.8px;top:52.3px" width="20.2" height="19" viewBox="0 0 20.2 19"><path d="M19.8 0 L10.5 0 C10.5 2.8 12.5 4.6 15.3 4.6 L15.3 9.2 C15.3 11.4 17.5 13.6 19.8 13.6 Z" fill="#2684ff"/><path d="M15 4.6 L5.8 4.6 C5.8 7.4 7.8 9.2 10.6 9.2 L10.6 13.8 C10.6 16 12.8 18.2 15 18.2 Z" fill="#1f78f0"/><path d="M10.4 9.4 L1 9.4 C1 12.2 3.2 14 6 14 L6 18.6 C6 18.6 10.4 19 10.4 14 Z" fill="#0c66e4"/></svg>
<div class="t" style="left:702.80px;top:74px;font-size:7.7px;line-height:9px;font-weight:400;color:#333;transform:scaleX(0.8604);">Get Jira</div>
<div class="t" style="left:707.20px;top:83px;font-size:7.7px;line-height:9px;font-weight:400;color:#333;transform:scaleX(0.8851);">Data</div>
<svg style="position:absolute;left:751.3px;top:99px" width="6.6" height="3.4" viewBox="0 0 6.6 3.4"><path d="M0.3 0.3 L3.3 3.1999999999999997 L6.3 0.3" fill="none" stroke="#444" stroke-width="1.0"/></svg>
<div class="t" style="left:8.20px;top:116px;font-size:8.4px;line-height:10px;font-weight:400;color:#333;transform:scaleX(0.8422);">L17</div>
<svg style="position:absolute;left:56.6px;top:119.4px" width="5.6" height="3.2" viewBox="0 0 5.6 3.2"><path d="M0.3 0.3 L2.8 3.0 L5.3 0.3" fill="none" stroke="#444" stroke-width="0.9"/></svg>
<div style="position:absolute;left:71.1px;top:117.9px;width:1.3px;height:1.3px;background:#6a6a6a;border-radius:50%"></div>
<div style="position:absolute;left:71.1px;top:120.5px;width:1.3px;height:1.3px;background:#6a6a6a;border-radius:50%"></div>
<div style="position:absolute;left:71.1px;top:123.1px;width:1.3px;height:1.3px;background:#6a6a6a;border-radius:50%"></div>
<svg style="position:absolute;left:81.5px;top:116.6px" width="7.8" height="7.8" viewBox="0 0 7.8 7.8"><path d="M0.4 0.4 L7.4 7.4 M7.4 0.4 L0.4 7.4" stroke="#b0b0b0" stroke-width="0.8"/></svg>
<svg style="position:absolute;left:94.8px;top:116.8px" width="9.5" height="7.4" viewBox="0 0 9.5 7.4"><path d="M0.4 3.8 L3.4 7 L9.2 0.4" fill="none" stroke="#b0b0b0" stroke-width="0.8"/></svg>
<div class="t" style="left:109.60px;top:117px;font-size:9.6px;line-height:11px;font-weight:400;color:#444;font-style:italic;font-family:Liberation Serif">f</div>
<div class="t" style="left:113.60px;top:119px;font-size:7.4px;line-height:9px;font-weight:400;color:#444;font-style:italic;font-family:Liberation Serif">x</div>
<svg style="position:absolute;left:754.8px;top:118.4px" width="5.6" height="3.2" viewBox="0 0 5.6 3.2"><path d="M0.3 0.3 L2.8 3.0 L5.3 0.3" fill="none" stroke="#444" stroke-width="0.9"/></svg>
<div class="t" style="left:56.40px;top:132px;font-size:8.4px;line-height:10px;font-weight:400;color:#606060;">A</div>
<div class="t" style="left:144.40px;top:132px;font-size:8.4px;line-height:10px;font-weight:400;color:#606060;">B</div>
<div class="t" style="left:232.17px;top:132px;font-size:8.4px;line-height:10px;font-weight:400;color:#606060;">C</div>
<div class="t" style="left:320.17px;top:132px;font-size:8.4px;line-height:10px;font-weight:400;color:#606060;">D</div>
<div class="t" style="left:408.40px;top:132px;font-size:8.4px;line-height:10px;font-weight:400;color:#606060;">E</div>
<div class="t" style="left:496.63px;top:132px;font-size:8.4px;line-height:10px;font-weight:400;color:#606060;">F</div>
<div class="t" style="left:583.93px;top:132px;font-size:8.4px;line-height:10px;font-weight:400;color:#606060;">G</div>
<div class="t" style="left:672.17px;top:132px;font-size:8.4px;line-height:10px;font-weight:400;color:#606060;">H</div>
<div style="position:absolute;left:103.2px;top:131.5px;width:0.7px;height:11.3px;background:#e2e2e2"></div>
<div style="position:absolute;left:191.2px;top:131.5px;width:0.7px;height:11.3px;background:#e2e2e2"></div>
<div style="position:absolute;left:279.2px;top:131.5px;width:0.7px;height:11.3px;background:#e2e2e2"></div>
<div style="position:absolute;left:367.2px;top:131.5px;width:0.7px;height:11.3px;background:#e2e2e2"></div>
<div style="position:absolute;left:455.2px;top:131.5px;width:0.7px;height:11.3px;background:#e2e2e2"></div>
<div style="position:absolute;left:543.2px;top:131.5px;width:0.7px;height:11.3px;background:#e2e2e2"></div>
<div style="position:absolute;left:631.2px;top:131.5px;width:0.7px;height:11.3px;background:#e2e2e2"></div>
<div style="position:absolute;left:719.2px;top:131.5px;width:0.7px;height:11.3px;background:#e2e2e2"></div>
<div style="position:absolute;left:0px;top:142px;width:756px;height:0.8px;background:#e4e4e4"></div>
<div style="position:absolute;left:15.3px;top:143px;width:0.7px;height:227.5px;background:#d6d6d6"></div>
<svg style="position:absolute;left:7.3px;top:134px" width="7.3" height="7.4" viewBox="0 0 7.3 7.4"><path d="M7.3 0 L7.3 7.4 L0 7.4 Z" fill="#d9d9d9"/></svg>
<div style="position:absolute;left:103.2px;top:143px;width:0.7px;height:227.4px;background:#ebebeb"></div>
<div style="position:absolute;left:191.2px;top:143px;width:0.7px;height:227.4px;background:#ebebeb"></div>
<div style="position:absolute;left:279.2px;top:143px;width:0.7px;height:227.4px;background:#ebebeb"></div>
<div style="position:absolute;left:367.2px;top:143px;width:0.7px;height:227.4px;background:#ebebeb"></div>
<div style="position:absolute;left:455.2px;top:143px;width:0.7px;height:227.4px;background:#ebebeb"></div>
<div style="position:absolute;left:543.2px;top:143px;width:0.7px;height:227.4px;background:#ebebeb"></div>
<div style="position:absolute;left:631.2px;top:143px;width:0.7px;height:227.4px;background:#ebebeb"></div>
<div style="position:absolute;left:719.2px;top:143px;width:0.7px;height:227.4px;background:#ebebeb"></div>
<div style="position:absolute;left:16px;top:154.05px;width:740px;height:0.7px;background:#ebebeb"></div>
<div style="position:absolute;left:0px;top:154.05px;width:15.3px;height:0.7px;background:#e2e2e2"></div>
<div style="position:absolute;left:16px;top:165.65px;width:740px;height:0.7px;background:#ebebeb"></div>
<div style="position:absolute;left:0px;top:165.65px;width:15.3px;height:0.7px;background:#e2e2e2"></div>
<div style="position:absolute;left:16px;top:177.25000000000003px;width:740px;height:0.7px;background:#ebebeb"></div>
<div style="position:absolute;left:0px;top:177.25000000000003px;width:15.3px;height:0.7px;background:#e2e2e2"></div>
<div style="position:absolute;left:16px;top:188.85000000000002px;width:740px;height:0.7px;background:#ebebeb"></div>
<div style="position:absolute;left:0px;top:188.85000000000002px;width:15.3px;height:0.7px;background:#e2e2e2"></div>
<div style="position:absolute;left:16px;top:200.45000000000002px;width:740px;height:0.7px;background:#ebebeb"></div>
<div style="position:absolute;left:0px;top:200.45000000000002px;width:15.3px;height:0.7px;background:#e2e2e2"></div>
<div style="position:absolute;left:16px;top:212.05px;width:740px;height:0.7px;background:#ebebeb"></div>
<div style="position:absolute;left:0px;top:212.05px;width:15.3px;height:0.7px;background:#e2e2e2"></div>
<div style="position:absolute;left:16px;top:223.65px;width:740px;height:0.7px;background:#ebebeb"></div>
<div style="position:absolute;left:0px;top:223.65px;width:15.3px;height:0.7px;background:#e2e2e2"></div>
<div style="position:absolute;left:16px;top:235.25000000000003px;width:740px;height:0.7px;background:#ebebeb"></div>
<div style="position:absolute;left:0px;top:235.25000000000003px;width:15.3px;height:0.7px;background:#e2e2e2"></div>
<div style="position:absolute;left:16px;top:246.85px;width:740px;height:0.7px;background:#ebebeb"></div>
<div style="position:absolute;left:0px;top:246.85px;width:15.3px;height:0.7px;background:#e2e2e2"></div>
<div style="position:absolute;left:16px;top:258.45px;width:740px;height:0.7px;background:#ebebeb"></div>
<div style="position:absolute;left:0px;top:258.45px;width:15.3px;height:0.7px;background:#e2e2e2"></div>
<div style="position:absolute;left:16px;top:270.04999999999995px;width:740px;height:0.7px;background:#ebebeb"></div>
<div style="position:absolute;left:0px;top:270.04999999999995px;width:15.3px;height:0.7px;background:#e2e2e2"></div>
<div style="position:absolute;left:16px;top:281.65px;width:740px;height:0.7px;background:#ebebeb"></div>
<div style="position:absolute;left:0px;top:281.65px;width:15.3px;height:0.7px;background:#e2e2e2"></div>
<div style="position:absolute;left:16px;top:293.25px;width:740px;height:0.7px;background:#ebebeb"></div>
<div style="position:absolute;left:0px;top:293.25px;width:15.3px;height:0.7px;background:#e2e2e2"></div>
<div style="position:absolute;left:16px;top:304.85px;width:740px;height:0.7px;background:#ebebeb"></div>
<div style="position:absolute;left:0px;top:304.85px;width:15.3px;height:0.7px;background:#e2e2e2"></div>
<div style="position:absolute;left:16px;top:316.45px;width:740px;height:0.7px;background:#ebebeb"></div>
<div style="position:absolute;left:0px;top:316.45px;width:15.3px;height:0.7px;background:#e2e2e2"></div>
<div style="position:absolute;left:16px;top:328.04999999999995px;width:740px;height:0.7px;background:#ebebeb"></div>
<div style="position:absolute;left:0px;top:328.04999999999995px;width:15.3px;height:0.7px;background:#e2e2e2"></div>
<div style="position:absolute;left:16px;top:339.65px;width:740px;height:0.7px;background:#ebebeb"></div>
<div style="position:absolute;left:0px;top:339.65px;width:15.3px;height:0.7px;background:#e2e2e2"></div>
<div style="position:absolute;left:16px;top:351.25px;width:740px;height:0.7px;background:#ebebeb"></div>
<div style="position:absolute;left:0px;top:351.25px;width:15.3px;height:0.7px;background:#e2e2e2"></div>
<div style="position:absolute;left:16px;top:362.85px;width:740px;height:0.7px;background:#ebebeb"></div>
<div style="position:absolute;left:0px;top:362.85px;width:15.3px;height:0.7px;background:#e2e2e2"></div>
<div style="position:absolute;left:16px;top:142.8px;width:739.2px;height:11.6px;background:#5b9bd5"></div>
<div style="position:absolute;left:103.2px;top:142.8px;width:0.7px;height:11.6px;background:#a3c6e9"></div>
<div style="position:absolute;left:191.2px;top:142.8px;width:0.7px;height:11.6px;background:#a3c6e9"></div>
<div style="position:absolute;left:279.2px;top:142.8px;width:0.7px;height:11.6px;background:#a3c6e9"></div>
<div style="position:absolute;left:367.2px;top:142.8px;width:0.7px;height:11.6px;background:#a3c6e9"></div>
<div style="position:absolute;left:455.2px;top:142.8px;width:0.7px;height:11.6px;background:#a3c6e9"></div>
<div style="position:absolute;left:543.2px;top:142.8px;width:0.7px;height:11.6px;background:#a3c6e9"></div>
<div style="position:absolute;left:631.2px;top:142.8px;width:0.7px;height:11.6px;background:#a3c6e9"></div>
<div style="position:absolute;left:719.2px;top:142.8px;width:0.7px;height:11.6px;background:#a3c6e9"></div>
<div style="position:absolute;left:16px;top:154.4px;width:739.2px;height:11.6px;background:#ddebf7"></div>
<div style="position:absolute;left:16px;top:165.6px;width:739.2px;height:0.8px;background:#a6c8ea"></div>
<div style="position:absolute;left:16px;top:177.2px;width:739.2px;height:0.8px;background:#a6c8ea"></div>
<div style="position:absolute;left:16px;top:177.60000000000002px;width:739.2px;height:11.6px;background:#ddebf7"></div>
<div style="position:absolute;left:16px;top:188.8px;width:739.2px;height:0.8px;background:#a6c8ea"></div>
<div style="position:absolute;left:16px;top:200.4px;width:739.2px;height:0.8px;background:#a6c8ea"></div>
<div style="position:absolute;left:16px;top:200.8px;width:739.2px;height:11.6px;background:#ddebf7"></div>
<div style="position:absolute;left:16px;top:212.0px;width:739.2px;height:0.8px;background:#a6c8ea"></div>
<div style="position:absolute;left:16px;top:223.6px;width:739.2px;height:0.8px;background:#a6c8ea"></div>
<div class="t" style="left:17.40px;top:145px;font-size:8.2px;line-height:9px;font-weight:700;color:#fff;transform:scaleX(0.9024);-webkit-text-stroke:0.15px #fff">ID</div>
<div style="position:absolute;left:93.60000000000001px;top:144.1px;width:9.2px;height:9.2px;background:#fff;border:0.6px solid #c8c8c8;box-sizing:border-box"></div>
<svg style="position:absolute;left:96.30000000000001px;top:147.9px" width="3.8" height="2.1" viewBox="0 0 3.8 2.1"><path d="M0 0 L3.8 0 L1.9 2.1 Z" fill="#505050"/></svg>
<div class="t" style="left:105.20px;top:145px;font-size:8.2px;line-height:9px;font-weight:700;color:#fff;transform:scaleX(0.9704);-webkit-text-stroke:0.15px #fff">Start time</div>
<div style="position:absolute;left:181.6px;top:144.1px;width:9.2px;height:9.2px;background:#fff;border:0.6px solid #c8c8c8;box-sizing:border-box"></div>
<svg style="position:absolute;left:184.29999999999998px;top:147.9px" width="3.8" height="2.1" viewBox="0 0 3.8 2.1"><path d="M0 0 L3.8 0 L1.9 2.1 Z" fill="#505050"/></svg>
<div class="t" style="left:193.30px;top:145px;font-size:8.2px;line-height:9px;font-weight:700;color:#fff;transform:scaleX(0.9527);-webkit-text-stroke:0.15px #fff">Completion time</div>
<div style="position:absolute;left:269.59999999999997px;top:144.1px;width:9.2px;height:9.2px;background:#fff;border:0.6px solid #c8c8c8;box-sizing:border-box"></div>
<svg style="position:absolute;left:272.29999999999995px;top:147.9px" width="3.8" height="2.1" viewBox="0 0 3.8 2.1"><path d="M0 0 L3.8 0 L1.9 2.1 Z" fill="#505050"/></svg>
<div class="t" style="left:281.60px;top:145px;font-size:8.2px;line-height:9px;font-weight:700;color:#fff;transform:scaleX(0.8913);-webkit-text-stroke:0.15px #fff">Email</div>
<div style="position:absolute;left:357.59999999999997px;top:144.1px;width:9.2px;height:9.2px;background:#fff;border:0.6px solid #c8c8c8;box-sizing:border-box"></div>
<svg style="position:absolute;left:360.29999999999995px;top:147.9px" width="3.8" height="2.1" viewBox="0 0 3.8 2.1"><path d="M0 0 L3.8 0 L1.9 2.1 Z" fill="#505050"/></svg>
<div class="t" style="left:369.10px;top:145px;font-size:8.2px;line-height:9px;font-weight:700;color:#fff;transform:scaleX(0.9670);-webkit-text-stroke:0.15px #fff">Name</div>
<div style="position:absolute;left:445.59999999999997px;top:144.1px;width:9.2px;height:9.2px;background:#fff;border:0.6px solid #c8c8c8;box-sizing:border-box"></div>
<svg style="position:absolute;left:448.29999999999995px;top:147.9px" width="3.8" height="2.1" viewBox="0 0 3.8 2.1"><path d="M0 0 L3.8 0 L1.9 2.1 Z" fill="#505050"/></svg>
<div class="t" style="left:457.10px;top:145px;font-size:8.2px;line-height:9px;font-weight:700;color:#fff;transform:scaleX(0.9596);-webkit-text-stroke:0.15px #fff">Total points</div>
<div style="position:absolute;left:533.6px;top:144.1px;width:9.2px;height:9.2px;background:#fff;border:0.6px solid #c8c8c8;box-sizing:border-box"></div>
<svg style="position:absolute;left:536.3000000000001px;top:147.9px" width="3.8" height="2.1" viewBox="0 0 3.8 2.1"><path d="M0 0 L3.8 0 L1.9 2.1 Z" fill="#505050"/></svg>
<div class="t" style="left:545.70px;top:145px;font-size:8.2px;line-height:9px;font-weight:700;color:#fff;transform:scaleX(0.9279);-webkit-text-stroke:0.15px #fff">Quiz feedback</div>
<div style="position:absolute;left:621.6px;top:144.1px;width:9.2px;height:9.2px;background:#fff;border:0.6px solid #c8c8c8;box-sizing:border-box"></div>
<svg style="position:absolute;left:624.3000000000001px;top:147.9px" width="3.8" height="2.1" viewBox="0 0 3.8 2.1"><path d="M0 0 L3.8 0 L1.9 2.1 Z" fill="#505050"/></svg>
<div class="t" style="left:634.00px;top:145px;font-size:8.2px;line-height:9px;font-weight:700;color:#fff;transform:scaleX(0.9431);-webkit-text-stroke:0.15px #fff">Grade posted time</div>
<div style="position:absolute;left:709.6px;top:144.1px;width:9.2px;height:9.2px;background:#fff;border:0.6px solid #c8c8c8;box-sizing:border-box"></div>
<svg style="position:absolute;left:712.3000000000001px;top:147.9px" width="3.8" height="2.1" viewBox="0 0 3.8 2.1"><path d="M0 0 L3.8 0 L1.9 2.1 Z" fill="#505050"/></svg>
<div class="t" style="left:721.40px;top:145px;font-size:8.2px;line-height:9px;font-weight:700;color:#fff;transform:scaleX(0.9191);-webkit-text-stroke:0.15px #fff">Last mod</div>
<div style="position:absolute;left:0px;top:328.4px;width:15.3px;height:11.6px;background:#e1e1e1"></div>
<div style="position:absolute;left:14.5px;top:328.4px;width:1.5px;height:11.6px;background:#107c41"></div>
<div class="t" style="left:5.76px;top:144px;font-size:8.4px;line-height:10px;font-weight:400;color:#505050;-webkit-text-stroke:0.2px #505050">1</div>
<div class="t" style="left:5.76px;top:156px;font-size:8.4px;line-height:10px;font-weight:400;color:#505050;-webkit-text-stroke:0.2px #505050">2</div>
<div class="t" style="left:5.76px;top:167px;font-size:8.4px;line-height:10px;font-weight:400;color:#505050;-webkit-text-stroke:0.2px #505050">3</div>
<div class="t" style="left:5.76px;top:179px;font-size:8.4px;line-height:10px;font-weight:400;color:#505050;-webkit-text-stroke:0.2px #505050">4</div>
<div class="t" style="left:5.76px;top:190px;font-size:8.4px;line-height:10px;font-weight:400;color:#505050;-webkit-text-stroke:0.2px #505050">5</div>
<div class="t" style="left:5.76px;top:202px;font-size:8.4px;line-height:10px;font-weight:400;color:#505050;-webkit-text-stroke:0.2px #505050">6</div>
<div class="t" style="left:5.76px;top:214px;font-size:8.4px;line-height:10px;font-weight:400;color:#505050;-webkit-text-stroke:0.2px #505050">7</div>
<div class="t" style="left:5.76px;top:225px;font-size:8.4px;line-height:10px;font-weight:400;color:#505050;-webkit-text-stroke:0.2px #505050">8</div>
<div class="t" style="left:5.76px;top:237px;font-size:8.4px;line-height:10px;font-weight:400;color:#505050;-webkit-text-stroke:0.2px #505050">9</div>
<div class="t" style="left:3.43px;top:248px;font-size:8.4px;line-height:10px;font-weight:400;color:#505050;-webkit-text-stroke:0.2px #505050">10</div>
<div class="t" style="left:3.74px;top:260px;font-size:8.4px;line-height:10px;font-weight:400;color:#505050;-webkit-text-stroke:0.2px #505050">11</div>
<div class="t" style="left:3.43px;top:272px;font-size:8.4px;line-height:10px;font-weight:400;color:#505050;-webkit-text-stroke:0.2px #505050">12</div>
<div class="t" style="left:3.43px;top:283px;font-size:8.4px;line-height:10px;font-weight:400;color:#505050;-webkit-text-stroke:0.2px #505050">13</div>
<div class="t" style="left:3.43px;top:295px;font-size:8.4px;line-height:10px;font-weight:400;color:#505050;-webkit-text-stroke:0.2px #505050">14</div>
<div class="t" style="left:3.43px;top:306px;font-size:8.4px;line-height:10px;font-weight:400;color:#505050;-webkit-text-stroke:0.2px #505050">15</div>
<div class="t" style="left:3.43px;top:318px;font-size:8.4px;line-height:10px;font-weight:400;color:#505050;-webkit-text-stroke:0.2px #505050">16</div>
<div class="t" style="left:3.43px;top:330px;font-size:8.4px;line-height:10px;font-weight:400;color:#107c41;-webkit-text-stroke:0.2px #107c41">17</div>
<div class="t" style="left:3.43px;top:341px;font-size:8.4px;line-height:10px;font-weight:400;color:#505050;-webkit-text-stroke:0.2px #505050">18</div>
<div class="t" style="left:3.43px;top:353px;font-size:8.4px;line-height:10px;font-weight:400;color:#505050;-webkit-text-stroke:0.2px #505050">19</div>
<div class="t" style="left:3.43px;top:364px;font-size:8.4px;line-height:10px;font-weight:400;color:#505050;-webkit-text-stroke:0.2px #505050">20</div>
<div class="t" style="left:97.02px;top:156px;font-size:8.6px;line-height:10px;font-weight:400;color:#222;-webkit-text-stroke:0.1px #222">1</div>
<div class="t" style="left:127.50px;top:156px;font-size:8.6px;line-height:10px;font-weight:400;color:#222;transform:scaleX(0.9634);-webkit-text-stroke:0.1px #222">8/16/23 14:13:01</div>
<div class="t" style="left:216.10px;top:156px;font-size:8.6px;line-height:10px;font-weight:400;color:#222;transform:scaleX(0.9603);-webkit-text-stroke:0.1px #222">8/16/23 14:13:36</div>
<div class="t" style="left:281.60px;top:156px;font-size:8.6px;line-height:10px;font-weight:400;color:#222;transform:scaleX(0.9424);-webkit-text-stroke:0.1px #222">anonymous</div>
<div class="t" style="left:537.02px;top:156px;font-size:8.6px;line-height:10px;font-weight:400;color:#222;-webkit-text-stroke:0.1px #222">0</div>
<div class="t" style="left:97.02px;top:167px;font-size:8.6px;line-height:10px;font-weight:400;color:#222;-webkit-text-stroke:0.1px #222">2</div>
<div class="t" style="left:127.50px;top:167px;font-size:8.6px;line-height:10px;font-weight:400;color:#222;transform:scaleX(0.9634);-webkit-text-stroke:0.1px #222">8/16/23 14:44:13</div>
<div class="t" style="left:216.10px;top:167px;font-size:8.6px;line-height:10px;font-weight:400;color:#222;transform:scaleX(0.9603);-webkit-text-stroke:0.1px #222">8/16/23 14:44:27</div>
<div class="t" style="left:281.60px;top:167px;font-size:8.6px;line-height:10px;font-weight:400;color:#222;transform:scaleX(0.9424);-webkit-text-stroke:0.1px #222">anonymous</div>
<div class="t" style="left:532.24px;top:167px;font-size:8.6px;line-height:10px;font-weight:400;color:#222;-webkit-text-stroke:0.1px #222">10</div>
<div class="t" style="left:97.02px;top:179px;font-size:8.6px;line-height:10px;font-weight:400;color:#222;-webkit-text-stroke:0.1px #222">3</div>
<div class="t" style="left:127.50px;top:179px;font-size:8.6px;line-height:10px;font-weight:400;color:#222;transform:scaleX(0.9634);-webkit-text-stroke:0.1px #222">8/16/23 14:44:33</div>
<div class="t" style="left:216.10px;top:179px;font-size:8.6px;line-height:10px;font-weight:400;color:#222;transform:scaleX(0.9603);-webkit-text-stroke:0.1px #222">8/16/23 14:44:43</div>
<div class="t" style="left:281.60px;top:179px;font-size:8.6px;line-height:10px;font-weight:400;color:#222;transform:scaleX(0.9424);-webkit-text-stroke:0.1px #222">anonymous</div>
<div class="t" style="left:532.24px;top:179px;font-size:8.6px;line-height:10px;font-weight:400;color:#222;-webkit-text-stroke:0.1px #222">20</div>
<div class="t" style="left:97.02px;top:190px;font-size:8.6px;line-height:10px;font-weight:400;color:#222;-webkit-text-stroke:0.1px #222">4</div>
<div class="t" style="left:127.50px;top:190px;font-size:8.6px;line-height:10px;font-weight:400;color:#222;transform:scaleX(0.9634);-webkit-text-stroke:0.1px #222">8/16/23 14:44:45</div>
<div class="t" style="left:216.10px;top:190px;font-size:8.6px;line-height:10px;font-weight:400;color:#222;transform:scaleX(0.9603);-webkit-text-stroke:0.1px #222">8/16/23 14:44:59</div>
<div class="t" style="left:281.60px;top:190px;font-size:8.6px;line-height:10px;font-weight:400;color:#222;transform:scaleX(0.9424);-webkit-text-stroke:0.1px #222">anonymous</div>
<div class="t" style="left:532.24px;top:190px;font-size:8.6px;line-height:10px;font-weight:400;color:#222;-webkit-text-stroke:0.1px #222">20</div>
<div class="t" style="left:97.02px;top:202px;font-size:8.6px;line-height:10px;font-weight:400;color:#222;-webkit-text-stroke:0.1px #222">5</div>
<div class="t" style="left:127.50px;top:202px;font-size:8.6px;line-height:10px;font-weight:400;color:#222;transform:scaleX(0.9634);-webkit-text-stroke:0.1px #222">8/16/23 14:45:01</div>
<div class="t" style="left:216.10px;top:202px;font-size:8.6px;line-height:10px;font-weight:400;color:#222;transform:scaleX(0.9603);-webkit-text-stroke:0.1px #222">8/16/23 14:45:13</div>
<div class="t" style="left:281.60px;top:202px;font-size:8.6px;line-height:10px;font-weight:400;color:#222;transform:scaleX(0.9424);-webkit-text-stroke:0.1px #222">anonymous</div>
<div class="t" style="left:532.24px;top:202px;font-size:8.6px;line-height:10px;font-weight:400;color:#222;-webkit-text-stroke:0.1px #222">10</div>
<div class="t" style="left:97.02px;top:214px;font-size:8.6px;line-height:10px;font-weight:400;color:#222;-webkit-text-stroke:0.1px #222">6</div>
<div class="t" style="left:127.50px;top:214px;font-size:8.6px;line-height:10px;font-weight:400;color:#222;transform:scaleX(0.9730);-webkit-text-stroke:0.1px #222">8/16/23 14:46:11</div>
<div class="t" style="left:216.10px;top:214px;font-size:8.6px;line-height:10px;font-weight:400;color:#222;transform:scaleX(0.9603);-webkit-text-stroke:0.1px #222">8/16/23 14:46:23</div>
<div class="t" style="left:281.60px;top:214px;font-size:8.6px;line-height:10px;font-weight:400;color:#222;transform:scaleX(0.9424);-webkit-text-stroke:0.1px #222">anonymous</div>
<div class="t" style="left:532.24px;top:214px;font-size:8.6px;line-height:10px;font-weight:400;color:#222;-webkit-text-stroke:0.1px #222">10</div>
<div style="position:absolute;left:0px;top:371px;width:768px;height:17.7px;background:#e4e8ee"></div>
<div style="position:absolute;left:0px;top:388.7px;width:768px;height:14.3px;background:#f3f3f3"></div>
<svg style="position:absolute;left:759.4px;top:135px" width="5.4" height="3.6" viewBox="0 0 5.4 3.6"><path d="M0 3.6 L2.7 0 L5.4 3.6 Z" fill="#606060"/></svg>
<div style="position:absolute;left:759.9px;top:142.3px;width:4.4px;height:207.3px;background:#6a6a6a;border-radius:2.2px"></div>
<svg style="position:absolute;left:759.3px;top:364.8px" width="5.4" height="3.8" viewBox="0 0 5.4 3.8"><path d="M0 0 L2.7 3.8 L5.4 0 Z" fill="#606060"/></svg>
<svg style="position:absolute;left:14px;top:376.8px" width="3.6" height="6" viewBox="0 0 3.6 6"><path d="M3.2 0.4 L0.6 3 L3.2 5.6" fill="none" stroke="#999" stroke-width="0.8"/></svg>
<svg style="position:absolute;left:33.4px;top:376.8px" width="3.6" height="6" viewBox="0 0 3.6 6"><path d="M0.4 0.4 L3 3 L0.4 5.6" fill="none" stroke="#999" stroke-width="0.8"/></svg>
<div style="position:absolute;left:66.4px;top:371px;width:35.2px;height:16.6px;background:#fff;border-radius:0 0 3px 3px"></div>
<div class="t" style="left:71.30px;top:374px;font-size:9.2px;line-height:10px;font-weight:400;color:#242424;transform:scaleX(0.8438);-webkit-text-stroke:0.2px #242424">Sheet1</div>
<div style="position:absolute;left:71.3px;top:384.4px;width:24.6px;height:1.3px;background:#1e8a4f;border-radius:1px"></div>
<div style="position:absolute;left:102.8px;top:373.5px;width:0.6px;height:11px;background:#d0d0d0"></div>
<svg style="position:absolute;left:128.9px;top:376.4px" width="6.7" height="6.7" viewBox="0 0 6.7 6.7"><path d="M3.35 0 L3.35 6.7 M0 3.35 L6.7 3.35" stroke="#555" stroke-width="0.8"/></svg>
<div style="position:absolute;left:462.4px;top:377.8px;width:1.3px;height:1.3px;background:#666;border-radius:50%"></div>
<div style="position:absolute;left:462.4px;top:380.3px;width:1.3px;height:1.3px;background:#666;border-radius:50%"></div>
<div style="position:absolute;left:462.4px;top:382.8px;width:1.3px;height:1.3px;background:#666;border-radius:50%"></div>
<div style="position:absolute;left:472.2px;top:374.8px;width:290px;height:10.4px;background:#f1f3f5;border-radius:5px"></div>
<svg style="position:absolute;left:475.3px;top:377.8px" width="4" height="4.8" viewBox="0 0 4 4.8"><path d="M4 0 L0 2.4 L4 4.8 Z" fill="#555"/></svg>
<div style="position:absolute;left:482.6px;top:377.6px;width:82px;height:4.4px;background:#6a6a6a;border-radius:2.2px"></div>
<svg style="position:absolute;left:749.8px;top:377.5px" width="3.8" height="5" viewBox="0 0 3.8 5"><path d="M0 0 L3.8 2.5 L0 5 Z" fill="#555"/></svg>
<div class="t" style="left:4.10px;top:392px;font-size:7.2px;line-height:9px;font-weight:400;color:#444;transform:scaleX(0.8071);">Ready</div>
<svg style="position:absolute;left:33.5px;top:392.4px" width="6.4" height="8.2" viewBox="0 0 6.4 8.2"><path d="M0.4 0.4 L4.2 0.4 L6 2.2 L6 7.8 L0.4 7.8 Z" fill="none" stroke="#555" stroke-width="0.8"/><rect x="1.4" y="3.6" width="3.6" height="3.4" fill="none" stroke="#444" stroke-width="0.7"/><path d="M3.2 3.6 L3.2 7 M1.4 5.3 L5 5.3" stroke="#444" stroke-width="0.6"/></svg>
<div class="t" style="left:43.00px;top:392px;font-size:7.2px;line-height:9px;font-weight:400;color:#555;transform:scaleX(0.8237);">General</div>
<svg style="position:absolute;left:75.8px;top:392.2px" width="8" height="8.6" viewBox="0 0 8 8.6"><circle cx="4" cy="4.4" r="3.7" fill="none" stroke="#555" stroke-width="0.7" stroke-dasharray="1.1 0.9"/><circle cx="4" cy="1.7" r="1.1" fill="#444"/><path d="M1 3.4 L7 3.4 M4 3.4 L4 5.6 L2.2 8.4 M4 5.6 L5.8 8.4" fill="none" stroke="#444" stroke-width="0.8"/></svg>
<div class="t" style="left:86.70px;top:392px;font-size:7.2px;line-height:9px;font-weight:700;color:#242424;transform:scaleX(0.8636);">Accessibility: Investigate</div>
<div style="position:absolute;left:590px;top:390px;width:23.6px;height:13px;background:#dcdcdc"></div>
<svg style="position:absolute;left:597px;top:392.2px" width="9.5" height="8.1" viewBox="0 0 9.5 8.1"><rect x="0.4" y="0.4" width="8.7" height="7.3" fill="none" stroke="#444" stroke-width="0.8"/><path d="M3.3 0.4 L3.3 7.7 M6.2 0.4 L6.2 7.7 M0.4 2.8 L9.1 2.8 M0.4 5.2 L9.1 5.2" stroke="#444" stroke-width="0.6"/></svg>
<svg style="position:absolute;left:621.4px;top:392.2px" width="9.1" height="8.1" viewBox="0 0 9.1 8.1"><rect x="0.4" y="0.4" width="8.3" height="7.3" rx="0.8" fill="none" stroke="#444" stroke-width="0.8"/><rect x="2.5" y="2.2" width="4.1" height="3.7" fill="none" stroke="#444" stroke-width="0.7"/></svg>
<svg style="position:absolute;left:645.6px;top:392.2px" width="9.1" height="8.1" viewBox="0 0 9.1 8.1"><rect x="0.4" y="0.4" width="8.3" height="7.3" rx="0.8" fill="none" stroke="#444" stroke-width="0.8"/><path d="M2.5 0.4 L2.5 4.5 L6.6 4.5 L6.6 0.4" fill="none" stroke="#444" stroke-width="0.7"/></svg>
<div style="position:absolute;left:665.7px;top:396px;width:3.3px;height:0.7px;background:#666"></div>
<div style="position:absolute;left:673.5px;top:396px;width:58.5px;height:0.7px;background:#8a8a8a"></div>
<div style="position:absolute;left:701.2px;top:392.5px;width:3.2px;height:7.3px;background:#555;border-radius:1px"></div>
<svg style="position:absolute;left:736px;top:394px" width="4" height="4" viewBox="0 0 4 4"><path d="M2 0 L2 4 M0 2 L4 2" stroke="#666" stroke-width="0.7"/></svg>
<div class="t" style="left:748.20px;top:393px;font-size:6.2px;line-height:7px;font-weight:400;color:#555;transform:scaleX(0.9521);">100%</div>
</body></html>
